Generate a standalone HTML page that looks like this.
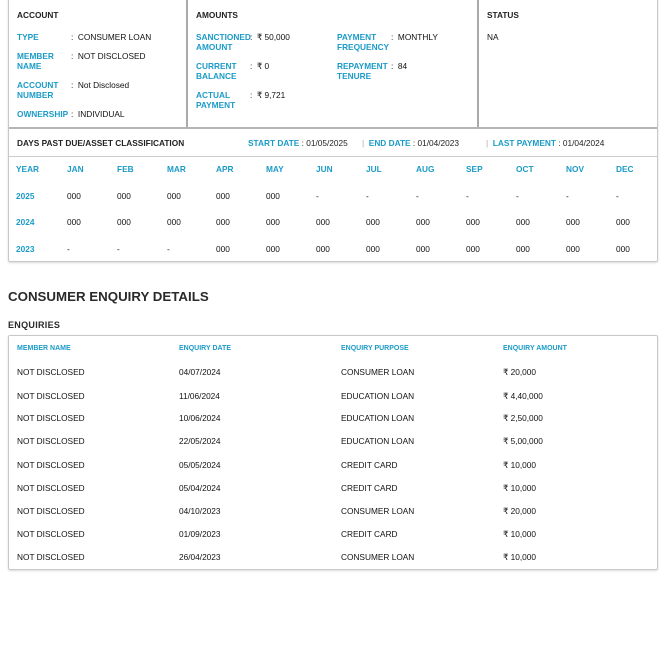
<!DOCTYPE html>
<html><head><meta charset="utf-8"><style>
*{margin:0;padding:0;box-sizing:border-box}
body{width:672px;height:670px;background:#fff;position:relative;font-family:"Liberation Sans",sans-serif;color:#222;overflow:hidden}
.a{position:absolute;font-size:8.3px;line-height:10px;white-space:nowrap}
.b{color:#1b9bc8;font-weight:bold}
.k{font-weight:bold;color:#222}
.v{color:#111}
.box{position:absolute;border:1px solid #c8c8c8;border-radius:2px;box-shadow:0 1px 2px rgba(0,0,0,.15)}
.ln{position:absolute;background:#aaa}
</style></head><body>
<div class="box" style="left:8px;top:-2px;width:650px;height:264px"></div>
<div class="ln" style="left:186px;top:0;width:2px;height:128px"></div>
<div class="ln" style="left:477px;top:0;width:2px;height:128px"></div>
<div class="ln" style="left:9px;top:127px;width:648px;height:2px;background:#b5b5b5"></div>
<div class="ln" style="left:9px;top:156px;width:648px;height:1px;background:#ccc"></div>

<div class="a k" style="left:17px;top:10px">ACCOUNT</div>
<div class="a b" style="left:17px;top:32px">TYPE</div><div class="a v" style="left:71px;top:32px">:&nbsp; CONSUMER LOAN</div>
<div class="a b" style="left:17px;top:51px">MEMBER<br>NAME</div><div class="a v" style="left:71px;top:51px">:&nbsp; NOT DISCLOSED</div>
<div class="a b" style="left:17px;top:80px">ACCOUNT<br>NUMBER</div><div class="a v" style="left:71px;top:80px">:&nbsp; Not Disclosed</div>
<div class="a b" style="left:17px;top:109px">OWNERSHIP</div><div class="a v" style="left:71px;top:109px">:&nbsp; INDIVIDUAL</div>

<div class="a k" style="left:196px;top:10px">AMOUNTS</div>
<div class="a b" style="left:196px;top:32px">SANCTIONED<br>AMOUNT</div><div class="a v" style="left:250px;top:32px">:&nbsp; ₹ 50,000</div>
<div class="a b" style="left:196px;top:61px">CURRENT<br>BALANCE</div><div class="a v" style="left:250px;top:61px">:&nbsp; ₹ 0</div>
<div class="a b" style="left:196px;top:90px">ACTUAL<br>PAYMENT</div><div class="a v" style="left:250px;top:90px">:&nbsp; ₹ 9,721</div>
<div class="a b" style="left:337px;top:32px">PAYMENT<br>FREQUENCY</div><div class="a v" style="left:391px;top:32px">:&nbsp; MONTHLY</div>
<div class="a b" style="left:337px;top:61px">REPAYMENT<br>TENURE</div><div class="a v" style="left:391px;top:61px">:&nbsp; 84</div>
<div class="a k" style="left:487px;top:10px">STATUS</div>
<div class="a v" style="left:487px;top:32px">NA</div>

<div class="a k" style="left:17px;top:138px">DAYS PAST DUE/ASSET CLASSIFICATION</div>
<div class="a" style="left:248px;top:138px"><span class="b">START DATE</span> : 01/05/2025</div>
<div class="a" style="left:362px;top:138px"><span style="color:#aaa">|</span>&nbsp; <span class="b">END DATE</span> : 01/04/2023</div>
<div class="a" style="left:486px;top:138px"><span style="color:#aaa">|</span>&nbsp; <span class="b">LAST PAYMENT</span> : 01/04/2024</div>

<div class="a b" style="left:16px;top:164px">YEAR</div><div class="a b" style="left:67px;top:164px">JAN</div><div class="a b" style="left:117px;top:164px">FEB</div><div class="a b" style="left:167px;top:164px">MAR</div><div class="a b" style="left:216px;top:164px">APR</div><div class="a b" style="left:266px;top:164px">MAY</div><div class="a b" style="left:316px;top:164px">JUN</div><div class="a b" style="left:366px;top:164px">JUL</div><div class="a b" style="left:416px;top:164px">AUG</div><div class="a b" style="left:466px;top:164px">SEP</div><div class="a b" style="left:516px;top:164px">OCT</div><div class="a b" style="left:566px;top:164px">NOV</div><div class="a b" style="left:616px;top:164px">DEC</div>

<div class="a b" style="left:16px;top:191px">2025</div><div class="a v" style="left:67px;top:191px">000</div><div class="a v" style="left:117px;top:191px">000</div><div class="a v" style="left:167px;top:191px">000</div><div class="a v" style="left:216px;top:191px">000</div><div class="a v" style="left:266px;top:191px">000</div><div class="a v" style="left:316px;top:191px">-</div><div class="a v" style="left:366px;top:191px">-</div><div class="a v" style="left:416px;top:191px">-</div><div class="a v" style="left:466px;top:191px">-</div><div class="a v" style="left:516px;top:191px">-</div><div class="a v" style="left:566px;top:191px">-</div><div class="a v" style="left:616px;top:191px">-</div>

<div class="a b" style="left:16px;top:217px">2024</div><div class="a v" style="left:67px;top:217px">000</div><div class="a v" style="left:117px;top:217px">000</div><div class="a v" style="left:167px;top:217px">000</div><div class="a v" style="left:216px;top:217px">000</div><div class="a v" style="left:266px;top:217px">000</div><div class="a v" style="left:316px;top:217px">000</div><div class="a v" style="left:366px;top:217px">000</div><div class="a v" style="left:416px;top:217px">000</div><div class="a v" style="left:466px;top:217px">000</div><div class="a v" style="left:516px;top:217px">000</div><div class="a v" style="left:566px;top:217px">000</div><div class="a v" style="left:616px;top:217px">000</div>

<div class="a b" style="left:16px;top:244px">2023</div><div class="a v" style="left:67px;top:244px">-</div><div class="a v" style="left:117px;top:244px">-</div><div class="a v" style="left:167px;top:244px">-</div><div class="a v" style="left:216px;top:244px">000</div><div class="a v" style="left:266px;top:244px">000</div><div class="a v" style="left:316px;top:244px">000</div><div class="a v" style="left:366px;top:244px">000</div><div class="a v" style="left:416px;top:244px">000</div><div class="a v" style="left:466px;top:244px">000</div><div class="a v" style="left:516px;top:244px">000</div><div class="a v" style="left:566px;top:244px">000</div><div class="a v" style="left:616px;top:244px">000</div>

<div class="a" style="left:8px;top:289px;font-size:13.3px;line-height:16px;font-weight:bold;color:#2a2a2a">CONSUMER ENQUIRY DETAILS</div>
<div class="a" style="left:8px;top:320px;font-size:9px;font-weight:bold;color:#2a2a2a;letter-spacing:.3px">ENQUIRIES</div>

<div class="box" style="left:8px;top:335px;width:650px;height:235px"></div>
<div class="a b" style="left:17px;top:344px;font-size:7px">MEMBER NAME</div><div class="a b" style="left:179px;top:344px;font-size:7px">ENQUIRY DATE</div><div class="a b" style="left:341px;top:344px;font-size:7px">ENQUIRY PURPOSE</div><div class="a b" style="left:503px;top:344px;font-size:7px">ENQUIRY AMOUNT</div>

<div class="a v" style="left:17px;top:367px">NOT DISCLOSED</div><div class="a v" style="left:179px;top:367px">04/07/2024</div><div class="a v" style="left:341px;top:367px">CONSUMER LOAN</div><div class="a v" style="left:503px;top:367px">₹ 20,000</div>
<div class="a v" style="left:17px;top:391px">NOT DISCLOSED</div><div class="a v" style="left:179px;top:391px">11/06/2024</div><div class="a v" style="left:341px;top:391px">EDUCATION LOAN</div><div class="a v" style="left:503px;top:391px">₹ 4,40,000</div>
<div class="a v" style="left:17px;top:413px">NOT DISCLOSED</div><div class="a v" style="left:179px;top:413px">10/06/2024</div><div class="a v" style="left:341px;top:413px">EDUCATION LOAN</div><div class="a v" style="left:503px;top:413px">₹ 2,50,000</div>
<div class="a v" style="left:17px;top:436px">NOT DISCLOSED</div><div class="a v" style="left:179px;top:436px">22/05/2024</div><div class="a v" style="left:341px;top:436px">EDUCATION LOAN</div><div class="a v" style="left:503px;top:436px">₹ 5,00,000</div>
<div class="a v" style="left:17px;top:460px">NOT DISCLOSED</div><div class="a v" style="left:179px;top:460px">05/05/2024</div><div class="a v" style="left:341px;top:460px">CREDIT CARD</div><div class="a v" style="left:503px;top:460px">₹ 10,000</div>
<div class="a v" style="left:17px;top:483px">NOT DISCLOSED</div><div class="a v" style="left:179px;top:483px">05/04/2024</div><div class="a v" style="left:341px;top:483px">CREDIT CARD</div><div class="a v" style="left:503px;top:483px">₹ 10,000</div>
<div class="a v" style="left:17px;top:506px">NOT DISCLOSED</div><div class="a v" style="left:179px;top:506px">04/10/2023</div><div class="a v" style="left:341px;top:506px">CONSUMER LOAN</div><div class="a v" style="left:503px;top:506px">₹ 20,000</div>
<div class="a v" style="left:17px;top:529px">NOT DISCLOSED</div><div class="a v" style="left:179px;top:529px">01/09/2023</div><div class="a v" style="left:341px;top:529px">CREDIT CARD</div><div class="a v" style="left:503px;top:529px">₹ 10,000</div>
<div class="a v" style="left:17px;top:552px">NOT DISCLOSED</div><div class="a v" style="left:179px;top:552px">26/04/2023</div><div class="a v" style="left:341px;top:552px">CONSUMER LOAN</div><div class="a v" style="left:503px;top:552px">₹ 10,000</div>
</body></html>
